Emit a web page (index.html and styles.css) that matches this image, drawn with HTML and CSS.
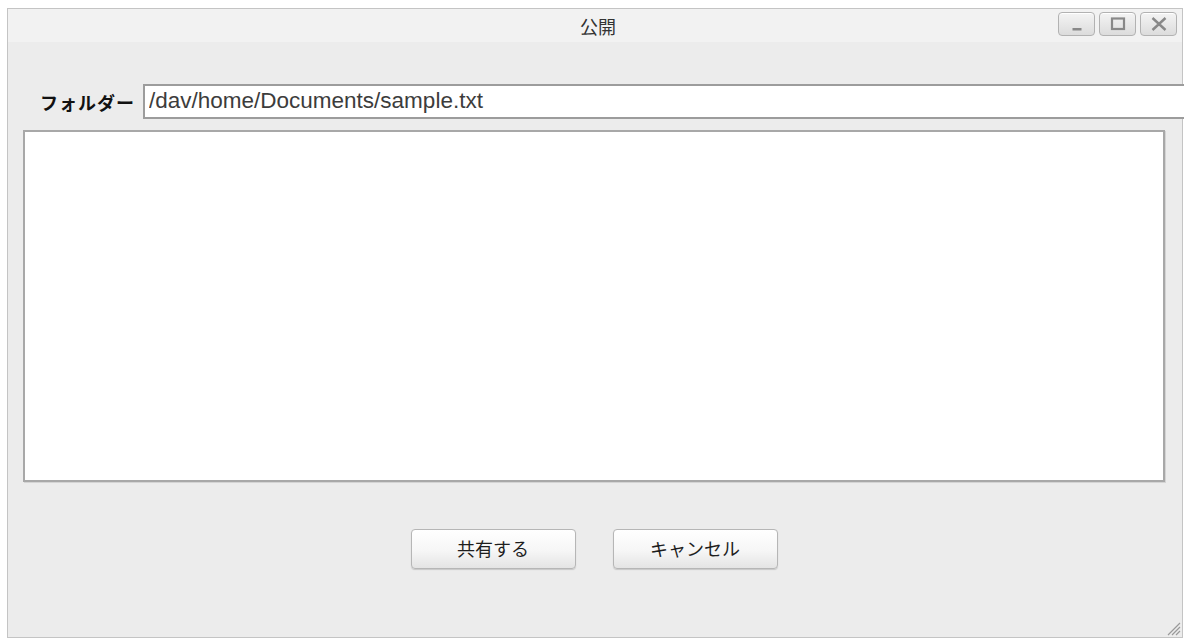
FILE: index.html
```html
<!DOCTYPE html>
<html lang="ja">
<head>
<meta charset="utf-8">
<title>公開</title>
<link rel="stylesheet" href="styles.css">
</head>
<body>
<div class="window">
  <div class="titlebar">
    <div class="spacer"></div>
    <div class="title">公開</div>
    <div class="controls">
      <button class="ctl" aria-label="最小化"><svg width="16" height="14" viewBox="0 0 16 14"><rect x="3.5" y="11" width="9" height="2.5" fill="#888"/></svg></button>
      <button class="ctl" aria-label="最大化"><svg width="16" height="14" viewBox="0 0 16 14"><rect x="2" y="1.5" width="12" height="10.5" fill="none" stroke="#888" stroke-width="2.2"/></svg></button>
      <button class="ctl" aria-label="閉じる"><svg width="16" height="14" viewBox="0 0 16 14"><path d="M1.5 1 L14.5 13 M14.5 1 L1.5 13" stroke="#888" stroke-width="2.4"/></svg></button>
    </div>
  </div>
  <div class="body">
    <div class="folder-row">
      <label class="folder-label" for="path">フォルダー</label>
      <input id="path" class="path" type="text" value="/dav/home/Documents/sample.txt">
    </div>
    <div class="list"></div>
    <div class="actions">
      <button class="btn">共有する</button>
      <button class="btn">キャンセル</button>
    </div>
  </div>
  <svg class="grip" width="16" height="16" viewBox="0 0 16 16">
    <path d="M15 3 L3 15 M15 7 L7 15 M15 11 L11 15" stroke="#9a9a9a" stroke-width="1.2"/>
  </svg>
</div>
</body>
</html>
```

FILE: styles.css
```css
html, body {
  margin: 0;
  padding: 0;
  background: #ffffff;
  overflow: hidden;
}

body {
  padding: 8px 0 0 7px;
  font-family: "Noto Sans CJK JP", "Liberation Sans", sans-serif;
}

.window {
  position: relative;
  box-sizing: border-box;
  width: 1176px;
  height: 630px;
  border: 1px solid #c4c4c4;
  background: #ececec;
  display: flex;
  flex-direction: column;
}

.titlebar {
  height: 33px;
  background: #f2f2f2;
  display: grid;
  grid-template-columns: 1fr auto 1fr;
  align-items: center;
  flex: none;
}

.title {
  font-size: 18px;
  color: #333;
  line-height: 1;
  padding-left: 6px;
}

.controls {
  justify-self: end;
  display: flex;
  gap: 4px;
  padding-right: 5px;
  align-self: start;
  padding-top: 3px;
}

.ctl {
  width: 37px;
  height: 24px;
  padding: 0;
  border: 1px solid #b2b2b2;
  border-radius: 4px;
  background: linear-gradient(#f4f4f4, #dcdcdc);
  display: flex;
  align-items: center;
  justify-content: center;
  box-shadow: inset 0 1px 0 #ffffff;
}

.body {
  flex: 1;
  display: flex;
  flex-direction: column;
  padding: 42px 0 0 15px;
}

.folder-row {
  display: flex;
  align-items: center;
  gap: 8px;
  height: 35px;
  margin-right: -2px;
}

.folder-label {
  padding-left: 17px;
  font-size: 18px;
  font-weight: bold;
  color: #111;
  letter-spacing: 1px;
  line-height: 1;
}

.path {
  flex: 1;
  box-sizing: border-box;
  height: 35px;
  margin: 0;
  border: 2px solid #9c9c9c;
  border-right: 0;
  background: #fff;
  padding: 0 4px 2px;
  font-family: "Liberation Sans", Arial, sans-serif;
  font-size: 22.5px;
  color: #3c3c3c;
  outline: none;
}

.list {
  box-sizing: border-box;
  margin-top: 11px;
  width: 1142px;
  height: 352px;
  border: 2px solid #a8a8a8;
  background: #fff;
  box-shadow: 1px 1px 0 #d4d4d4;
}

.actions {
  display: flex;
  justify-content: center;
  gap: 37px;
  margin-top: 47px;
  padding-right: 17px;
}

.btn {
  width: 165px;
  height: 40px;
  box-sizing: border-box;
  border: 1px solid #b6b6b6;
  border-radius: 4px;
  background: linear-gradient(#ffffff 0%, #f6f6f6 55%, #e4e4e4 100%);
  box-shadow: 0 1px 1px #c8c8c8;
  font-family: "Noto Sans CJK JP", sans-serif;
  font-size: 18px;
  color: #1e1e1e;
  padding: 0 0 2px;
}

.grip {
  position: absolute;
  right: 1px;
  bottom: 1px;
}
```
